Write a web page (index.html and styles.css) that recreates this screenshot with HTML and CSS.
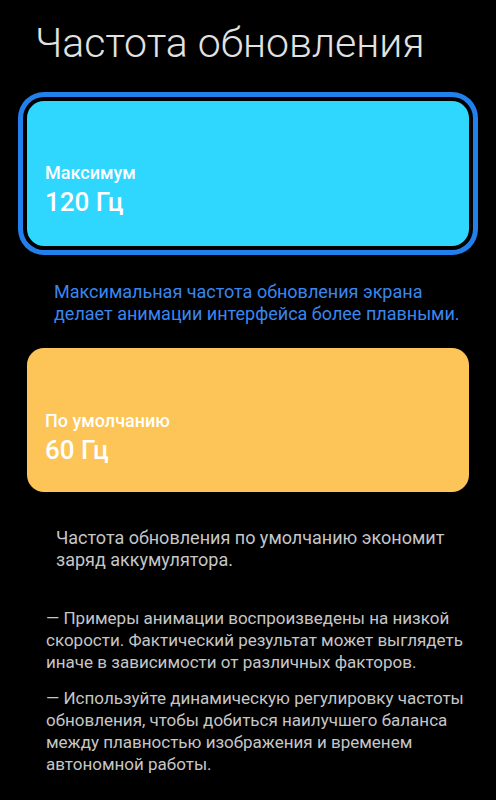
FILE: index.html
```html
<!DOCTYPE html>
<html lang="ru">
<head>
<meta charset="utf-8">
<link rel="stylesheet" href="styles.css">
</head>
<body>
<div class="screen">
  <h1 class="title">Частота обновления</h1>
  <div class="card card-max">
    <div class="card-label">Максимум</div>
    <div class="card-value">120 Гц</div>
  </div>
  <p class="note note-blue">Максимальная частота обновления экрана делает анимации интерфейса более плавными.</p>
  <div class="card card-default">
    <div class="card-label">По умолчанию</div>
    <div class="card-value">60 Гц</div>
  </div>
  <p class="note note-grey">Частота обновления по умолчанию экономит заряд аккумулятора.</p>
  <p class="foot">— Примеры анимации воспроизведены на низкой<br>скорости. Фактический результат может выглядеть<br>иначе в зависимости от различных факторов.</p>
  <p class="foot foot-last">— Используйте динамическую регулировку частоты<br>обновления, чтобы добиться наилучшего баланса<br>между плавностью изображения и временем<br>автономной работы.</p>
</div>
</body>
</html>
```
FILE: styles.css
```css
html, body {
  margin: 0;
  padding: 0;
  background: #000;
}
body {
  font-family: Roboto, "Noto Sans", sans-serif;
  width: 496px;
  height: 800px;
  overflow: hidden;
}
.screen {
  display: flex;
  flex-direction: column;
  padding-top: 19px;
}
.title {
  margin: 0 0 0 35px;
  font-size: 41px;
  font-weight: 300;
  line-height: 48px;
  color: #e2e2e2;
  letter-spacing: 0;
}
.card {
  margin-left: 27px;
  width: 442px;
  box-sizing: border-box;
  height: 145px;
  border-radius: 17px;
  padding-left: 18px;
  color: #fff;
}
.card-max {
  margin-top: 34px;
  background: #2fd7ff;
  padding-top: 61px;
  box-shadow: 0 0 0 4px #000, 0 0 0 9px #2180ec;
}
.card-default {
  background: #fdc457;
  padding-top: 62px;
  height: 144px;
}
.card-label {
  font-size: 18px;
  font-weight: 500;
  line-height: 22px;
}
.card-value {
  margin-top: 3px;
  font-size: 26px;
  font-weight: 500;
  line-height: 30px;
}
.note {
  margin: 0;
  font-size: 18px;
  line-height: 22px;
}
.note-blue {
  width: 410px;
  margin: 35px 0 23px 54px;
  color: #3a86ef;
}
.note-grey {
  width: 395px;
  margin: 35px 0 36px 56px;
  color: #c6c6c6;
}
.foot {
  margin: 0 0 14px 46px;
  font-size: 17px;
  line-height: 22px;
  color: #c6c6c6;
  white-space: nowrap;
}
```
